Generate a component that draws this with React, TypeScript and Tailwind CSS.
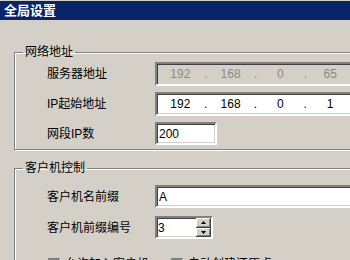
import React from "react";

const sunken =
  "border-2 border-t-[#808080] border-l-[#808080] border-b-white border-r-white shadow-[inset_1px_1px_0_#404040,inset_-1px_-1px_0_#d4d0c8]";

const raised =
  "bg-[#d4d0c8] shadow-[inset_-1px_-1px_0_#404040,inset_1px_1px_0_#ffffff,inset_-2px_-2px_0_#808080]";

const IpField = ({ parts, disabled }: { parts: string[]; disabled?: boolean }) => (
  <div
    className={`${sunken} h-[24px] w-[200px] flex items-center ${
      disabled ? "bg-[#d4d0c8] text-[#8a8a8a]" : "bg-white text-black"
    }`}
  >
    {parts.map((p, i) => (
      <React.Fragment key={i}>
        {i > 0 && <span className="w-[4px] text-center">.</span>}
        <span className={`text-center ${i === 0 ? "w-[47px]" : "w-[46px]"}`}>{p}</span>
      </React.Fragment>
    ))}
  </div>
);

const Row = ({ label, children }: { label: string; children: React.ReactNode }) => (
  <div className="flex items-center">
    <div className="w-[108px] shrink-0">{label}</div>
    {children}
  </div>
);

const Group = ({ title, children }: { title: string; children: React.ReactNode }) => (
  <fieldset className="ml-[14px] w-[360px] border border-[#808080] shadow-[inset_1px_1px_0_#ffffff,1px_1px_0_#ffffff]">
    <legend className="ml-[8px] px-[2px] h-[16px] leading-[16px]">{title}</legend>
    <div className="pl-[32px]">{children}</div>
  </fieldset>
);

export default function App() {
  return (
    <div
      className="w-[350px] h-[260px] overflow-hidden bg-[#d4d0c8] text-[12px] text-black"
      style={{ fontFamily: '"Liberation Sans", "Noto Sans CJK SC", sans-serif' }}
    >
      <div className="mt-px h-[19px] bg-[#0a246a] pl-[4px] flex items-center text-white text-[13px] font-bold">
        全局设置
      </div>

      <div className="mt-[24px]">
        <Group title="网络地址">
          <div className="flex flex-col gap-[6px] pt-[2px] pb-[4px]">
            <Row label="服务器地址">
              <IpField parts={["192", "168", "0", "65"]} disabled />
            </Row>
            <Row label="IP起始地址">
              <IpField parts={["192", "168", "0", "1"]} />
            </Row>
            <Row label="网段IP数">
              <div className={`${sunken} h-[23px] w-[62px] bg-white pl-[2px] flex items-center`}>200</div>
            </Row>
          </div>
        </Group>

        <div className="mt-[10px]">
          <Group title="客户机控制">
            <div className="flex flex-col gap-[8px] pt-[9px]">
              <Row label="客户机名前缀">
                <div className={`${sunken} h-[23px] w-[200px] bg-white pl-[2px] flex items-center`}>A</div>
              </Row>
              <Row label="客户机前缀编号">
                <div className={`${sunken} h-[23px] w-[58px] bg-white flex items-center`}>
                  <span className="flex-1 pl-[1px]">3</span>
                  <div className="flex flex-col w-[15px] h-[19px]">
                    <div className={`${raised} flex-1 flex items-center justify-center`}>
                      <svg width="5" height="3" viewBox="0 0 5 3">
                        <path d="M2.5 0L5 3H0z" fill="#000" />
                      </svg>
                    </div>
                    <div className={`${raised} flex-1 flex items-center justify-center`}>
                      <svg width="5" height="3" viewBox="0 0 5 3">
                        <path d="M0 0h5L2.5 3z" fill="#000" />
                      </svg>
                    </div>
                  </div>
                </div>
              </Row>
              <div className="flex items-center gap-[4px] ml-px pt-[8px]">
                <span className={`${sunken} w-[13px] h-[13px] bg-white`} />
                <span className="w-[102px]">允许加入客户机</span>
                <span className={`${sunken} w-[13px] h-[13px] bg-white`} />
                <span>自动创建还原点</span>
              </div>
            </div>
          </Group>
        </div>
      </div>
    </div>
  );
}
